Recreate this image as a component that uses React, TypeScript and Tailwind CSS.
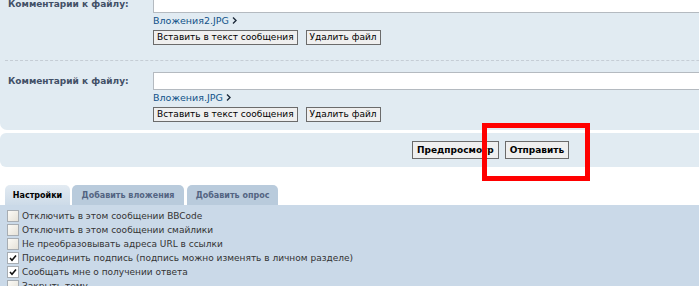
const font = "font-['DejaVu_Sans',Verdana,sans-serif]";

type AttachProps = {
  label: string;
  file: string;
};

const Chevron = () => (
  <svg width="5" height="7" viewBox="0 0 5 7" className="ml-[3px] inline-block">
    <path d="M1 0.5 L4 3.5 L1 6.5" fill="none" stroke="#1c2a3a" strokeWidth="1.4" />
  </svg>
);

const SmallButton = ({ children }: { children: React.ReactNode }) => (
  <button className="h-[15px] px-[3px] bg-[#efefef] border border-[#6b6b6b] text-[9px] leading-[13px] text-black whitespace-nowrap">
    {children}
  </button>
);

const Attachment = ({ label, file }: AttachProps) => {
  return (
    <div className="flex">
      <div className="w-[153px] shrink-0 pl-[8px] pt-[3px] text-[9px] leading-[12px] font-bold text-[#425067] whitespace-nowrap">
        {label}
      </div>
      <div className="flex-1 flex flex-col">
        <div className="h-[18px] w-full bg-white border border-[#b4bac0]" />
        <div className="mt-[1px] h-[13px] flex items-center text-[9.5px] leading-[13px] text-[#105289]">
          {file}
          <Chevron />
        </div>
        <div className="mt-[3px] flex gap-[8px]">
          <SmallButton>Вставить в текст сообщения</SmallButton>
          <SmallButton>Удалить файл</SmallButton>
        </div>
      </div>
    </div>
  );
};

const Check = ({ checked, text }: { checked?: boolean; text: string }) => (
  <div className="h-[14px] flex items-center pl-[7px]">
    <span
      className={
        "w-[12px] h-[12px] shrink-0 border border-[#a7adb3] flex items-center justify-center " +
        (checked ? "bg-white" : "bg-gradient-to-br from-[#fbfaf6] to-[#e6e2d8]")
      }
    >
      {checked && (
        <svg width="8" height="8" viewBox="0 0 8 8">
          <path d="M1 4 L3 6.2 L7 1.5" fill="none" stroke="#111" strokeWidth="1.6" />
        </svg>
      )}
    </span>
    <span className="ml-[3px] text-[9px] leading-[14px] text-[#333] whitespace-nowrap">{text}</span>
  </div>
);

export default function App() {
  return (
    <div className={`relative w-[699px] h-[286px] overflow-hidden bg-white ${font}`}>
      <div className="w-[1000px] -mt-[10px] pt-[5px] pb-[8px] bg-[#e1ebf2] rounded-b-[7px]">
        <div className="pb-[15px]">
          <Attachment label="Комментарии к файлу:" file="Вложения2.JPG" />
        </div>
        <div className="ml-[5px] border-t border-dashed border-[#c5cdd5]" />
        <div className="pt-[11px]">
          <Attachment label="Комментарий к файлу:" file="Вложения.JPG" />
        </div>
      </div>

      <div className="mt-[3px] w-[1000px] h-[34px] bg-[#e1ebf2] rounded-[6px] flex items-center pl-[412px] gap-[6px]">
        <button className="h-[18px] px-[4px] bg-[#efefef] border border-[#6b6b6b] text-[9px] font-bold text-black leading-[16px]">
          Предпросмотр
        </button>
        <button className="h-[18px] px-[4px] bg-[#efefef] border border-[#6b6b6b] text-[9px] font-bold text-black leading-[16px]">
          Отправить
        </button>
      </div>

      <div className="mt-[18px] flex pl-[5px] h-[20px] text-[8px] font-bold leading-[21px] whitespace-nowrap">
        <div className="w-[65px] rounded-t-[5px] bg-gradient-to-b from-[#e3ebf2] to-[#cddbe8] text-center text-black">
          Настройки
        </div>
        <div className="ml-[2px] w-[112px] rounded-t-[5px] bg-[#b9cbdc] text-center text-[#536482]">
          Добавить вложения
        </div>
        <div className="ml-[3px] w-[91px] rounded-t-[5px] bg-[#b9cbdc] text-center text-[#536482]">
          Добавить опрос
        </div>
      </div>
      <div className="bg-[#cad9e8] pt-[4px] h-[100px]">
        <Check text="Отключить в этом сообщении BBCode" />
        <Check text="Отключить в этом сообщении смайлики" />
        <Check text="Не преобразовывать адреса URL в ссылки" />
        <Check checked text="Присоединить подпись (подпись можно изменять в личном разделе)" />
        <Check checked text="Сообщать мне о получении ответа" />
        <Check text="Закрыть тему" />
      </div>

      <div className="absolute left-[482px] top-[123px] w-[108px] h-[58px] border-[5px] border-[#ff0000]" />
    </div>
  );
}
